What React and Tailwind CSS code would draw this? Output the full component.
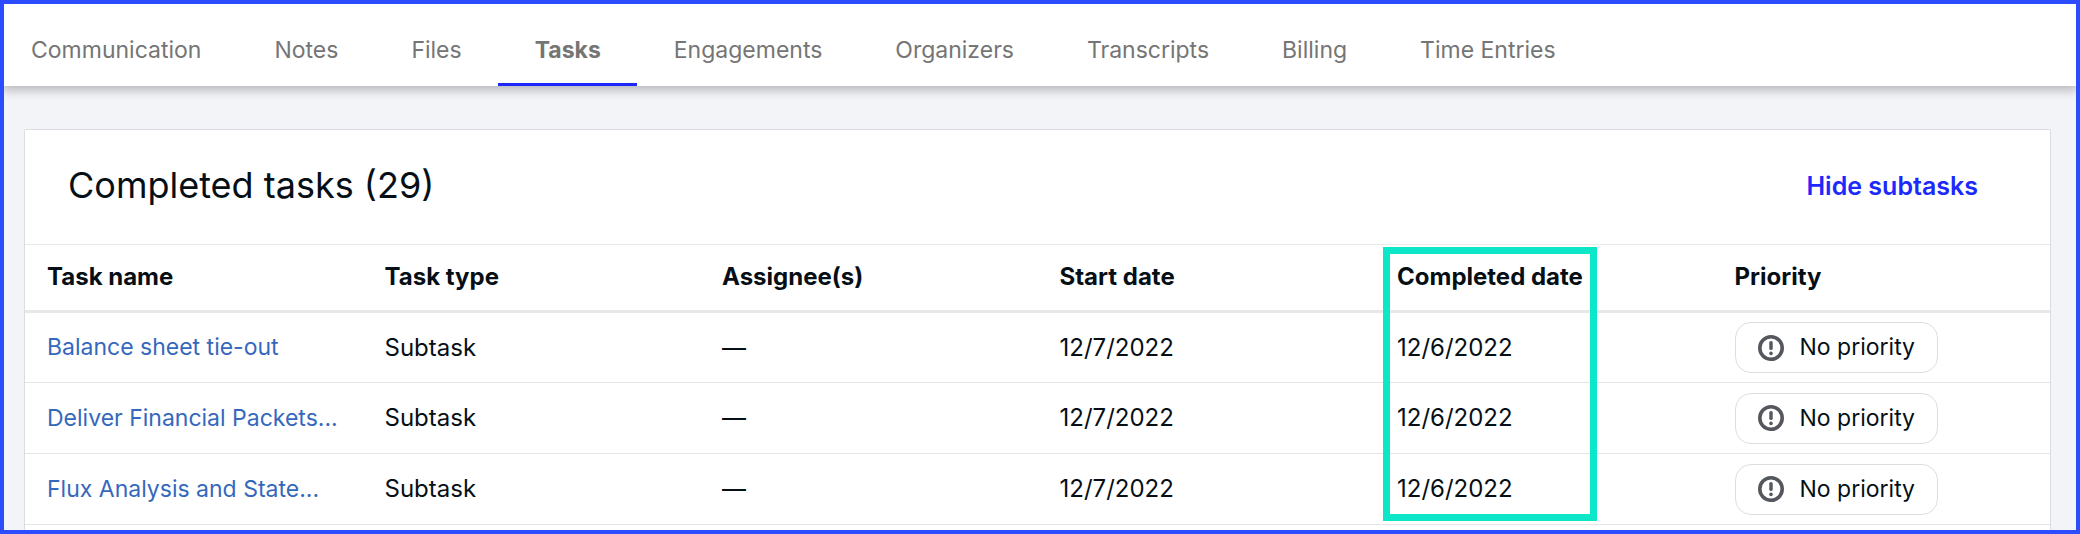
import { useState } from "react";

const tabs = [
  "Communication",
  "Notes",
  "Files",
  "Tasks",
  "Engagements",
  "Organizers",
  "Transcripts",
  "Billing",
  "Time Entries",
];

const columns = [
  "Task name",
  "Task type",
  "Assignee(s)",
  "Start date",
  "Completed date",
  "Priority",
];

const tasks = [
  {
    id: 1,
    name: "Balance sheet tie-out",
    type: "Subtask",
    assignee: "—",
    start: "12/7/2022",
    completed: "12/6/2022",
    priority: "No priority",
  },
  {
    id: 2,
    name: "Deliver Financial Packets...",
    type: "Subtask",
    assignee: "—",
    start: "12/7/2022",
    completed: "12/6/2022",
    priority: "No priority",
  },
  {
    id: 3,
    name: "Flux Analysis and State...",
    type: "Subtask",
    assignee: "—",
    start: "12/7/2022",
    completed: "12/6/2022",
    priority: "No priority",
  },
];

const PriorityIcon = () => (
  <svg
    width="26"
    height="26"
    viewBox="0 0 26 26"
    fill="none"
    stroke="#55575f"
    strokeLinecap="round"
    aria-hidden="true"
  >
    <circle cx="13" cy="13" r="11.2" strokeWidth="3.6" />
    <path d="M13 7.6v5.8" strokeWidth="3.4" />
    <circle cx="13" cy="18.4" r="1.8" fill="#55575f" stroke="none" />
  </svg>
);

const TabBar = ({ activeTab, setActiveTab }) => (
  <nav className="relative flex bg-white shadow-[0_2px_10px_2px_rgba(0,0,0,0.26)]">
    {tabs.map((tab) => (
      <button
        key={tab}
        onClick={() => setActiveTab(tab)}
        className={`h-[82px] border-b-3 pt-[18px] pr-9 pb-1 pl-[37px] text-[23px] whitespace-nowrap first:pl-[27px] ${
          activeTab === tab
            ? "border-[#1d29fb] font-bold text-[#757575]"
            : "border-transparent text-[#757575]"
        }`}
      >
        {tab}
      </button>
    ))}
  </nav>
);

const TaskTable = () => (
  <table className="w-full table-fixed border-collapse text-left text-2xl">
    <thead>
      <tr className="border-t border-b-3 border-[#e8e8e8]">
        {columns.map((column) => (
          <th key={column} className="relative h-[67px] pb-[2px] pl-[22px] font-bold">
            {column}
            {/* Highlight runs down over the whole column */}
            {column === "Completed date" && (
              <span className="pointer-events-none absolute top-[2px] left-2 h-[274px] w-[214px] border-7 border-[#0ce7c9]" />
            )}
          </th>
        ))}
      </tr>
    </thead>
    <tbody>
      {tasks.map((task) => (
        <tr key={task.id} className="h-[71px] border-b border-[#e5e5e5]">
          <td className="truncate pl-[22px] text-[23px]">
            <a href="#" className="text-[#3568bd]">
              {task.name}
            </a>
          </td>
          <td className="pl-[22px]">{task.type}</td>
          <td className="pl-[22px]">{task.assignee}</td>
          <td className="pl-[22px]">{task.start}</td>
          <td className="pl-[22px]">{task.completed}</td>
          <td className="pl-[22px]">
            <button className="flex h-[51px] items-center gap-4 rounded-2xl border border-[#dedee0] px-[22px] text-[23px]">
              <PriorityIcon />
              {task.priority}
            </button>
          </td>
        </tr>
      ))}
    </tbody>
  </table>
);

const App = () => {
  const [activeTab, setActiveTab] = useState("Tasks");

  return (
    <div className="overflow-hidden border-4 border-[#2b4dff] bg-[#f3f4f8] font-['Inter',sans-serif] text-[#060f16]">
      <TabBar activeTab={activeTab} setActiveTab={setActiveTab} />

      <main className="pt-[43px] pr-[25px] pl-5">
        <section className="rounded-t-xs border border-b-0 border-[#dcdde0] bg-white pb-[5px]">
          <div className="flex h-[114px] items-center justify-between pr-[72px] pl-[43px]">
            <h1 className="pb-1 text-4xl">Completed tasks (29)</h1>
            <button className="text-[25px] font-semibold text-[#1d29fb]">
              Hide subtasks
            </button>
          </div>
          <TaskTable />
        </section>
      </main>
    </div>
  );
};

export default App;
